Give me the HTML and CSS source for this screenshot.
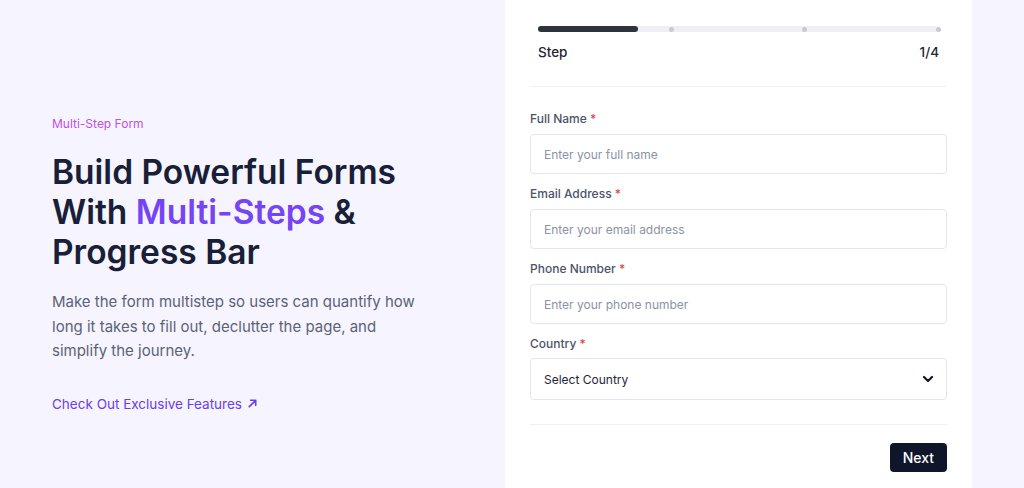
FILE: index.html
```html
<!DOCTYPE html>
<html lang="en">
<head>
  <meta charset="UTF-8">
  <title>Multi-Step Form</title>
  <link rel="stylesheet" href="styles.css">
</head>
<body>

  <!-- Intro -->
  <section class="intro">
    <p class="eyebrow">Multi-Step Form</p>
    <h1>Build Powerful Forms With <span class="accent">Multi-Steps</span> &amp; Progress Bar</h1>
    <p class="lead">Make the form multistep so users can quantify how long it takes to fill out, declutter the page, and simplify the journey.</p>
    <a class="link" href="#">Check Out Exclusive Features
      <svg width="11" height="11" viewBox="0 0 12 12" fill="none" stroke="currentColor" stroke-width="1.8" stroke-linecap="round" stroke-linejoin="round"><path d="M2.5 9.5 9.5 2.5M4 2.5h5.5V8"/></svg>
    </a>
  </section>

  <!-- Form card -->
  <section class="card">
    <div class="progress">
      <div class="track">
        <div class="fill" style="width: 25%;"></div>
        <span class="dot" style="left: 33.33%;"></span>
        <span class="dot" style="left: 66.66%;"></span>
        <span class="dot" style="left: 100%;"></span>
      </div>
      <div class="step-row">
        <span>Step</span>
        <span>1/4</span>
      </div>
    </div>

    <form class="fields">
      <div class="field">
        <label>Full Name <span class="req">*</span></label>
        <input type="text" placeholder="Enter your full name">
      </div>
      <div class="field">
        <label>Email Address <span class="req">*</span></label>
        <input type="email" placeholder="Enter your email address">
      </div>
      <div class="field">
        <label>Phone Number <span class="req">*</span></label>
        <input type="tel" placeholder="Enter your phone number">
      </div>
      <div class="field">
        <label>Country <span class="req">*</span></label>
        <div class="select">
          <span>Select Country</span>
          <svg width="12" height="8" viewBox="0 0 12 8" fill="none" stroke="currentColor" stroke-width="2.2" stroke-linecap="round" stroke-linejoin="round"><path d="M2 2l4 4 4-4"/></svg>
        </div>
      </div>
    </form>

    <div class="actions">
      <button type="button">Next</button>
    </div>
  </section>

  <div class="edge"></div>

</body>
</html>
```

FILE: styles.css
```css
* {
  box-sizing: border-box;
}

body {
  margin: 0;
  height: 488px;
  overflow: hidden;
  display: flex;
  background: #f6f4fe;
  font-family: Inter, "Noto Sans", sans-serif;
  color: #1a2238;
}

/* intro column */
.intro {
  width: 505px;
  padding: 116px 60px 0 52px;
}

.eyebrow {
  margin: 0 0 20px;
  font-size: 12px;
  line-height: 16px;
  color: #c24fe0;
}

h1 {
  margin: 0 0 18px;
  font-size: 33.5px;
  line-height: 40px;
  font-weight: 600;
  color: #172038;
}

.accent {
  color: #7444f5;
}

.lead {
  max-width: 375px;
  margin: 0 0 29px;
  font-size: 15px;
  line-height: 24.5px;
  color: #5a6377;
}

.link {
  display: inline-flex;
  align-items: center;
  gap: 5px;
  font-size: 13.5px;
  line-height: 18px;
  color: #6a3df0;
  text-decoration: none;
}

/* form card */
.card {
  width: 467px;
  background: #fff;
  padding: 0 25px;
}

.progress {
  padding: 26px 8px 26px;
  border-bottom: 1px solid #eef0f4;
}

.track {
  position: relative;
  height: 6px;
  border-radius: 3px;
  background: #eef0f6;
}

.fill {
  height: 6px;
  border-radius: 3px;
  background: #2f333d;
}

.dot {
  position: absolute;
  top: 0.5px;
  width: 5px;
  height: 5px;
  margin-left: -3px;
  border-radius: 50%;
  background: #c8cbd5;
}

.step-row {
  display: flex;
  justify-content: space-between;
  margin-top: 12px;
  font-size: 13.5px;
  line-height: 16px;
  font-weight: 500;
  color: #1e2638;
}

.fields {
  display: flex;
  flex-direction: column;
  gap: 12px;
  padding: 24px 0 24px;
  border-bottom: 1px solid #eef0f4;
}

.field {
  display: flex;
  flex-direction: column;
  gap: 7px;
}

.field:last-child {
  gap: 6px;
}

label {
  font-size: 12px;
  line-height: 16px;
  font-weight: 500;
  color: #4b546a;
}

.req {
  color: #e04a4a;
}

input,
.select {
  height: 40px;
  padding: 0 13px;
  border: 1px solid #e3e6ee;
  border-radius: 4px;
  font-family: inherit;
  font-size: 12px;
  color: #1e2638;
  background: #fff;
}

input::placeholder {
  color: #8b93a6;
}

.select {
  height: 42px;
  display: flex;
  align-items: center;
  justify-content: space-between;
  font-size: 12px;
  font-weight: 400;
  color: #1e2638;
}

.select svg {
  color: #111827;
  margin-right: -1px;
}

.actions {
  display: flex;
  justify-content: flex-end;
  padding-top: 18px;
}

button {
  height: 29px;
  padding: 0 13px;
  border: none;
  border-radius: 4px;
  background: #0f1629;
  color: #fff;
  font-family: inherit;
  font-size: 14px;
  font-weight: 500;
  cursor: pointer;
}

.edge {
  flex: 1;
}
```
